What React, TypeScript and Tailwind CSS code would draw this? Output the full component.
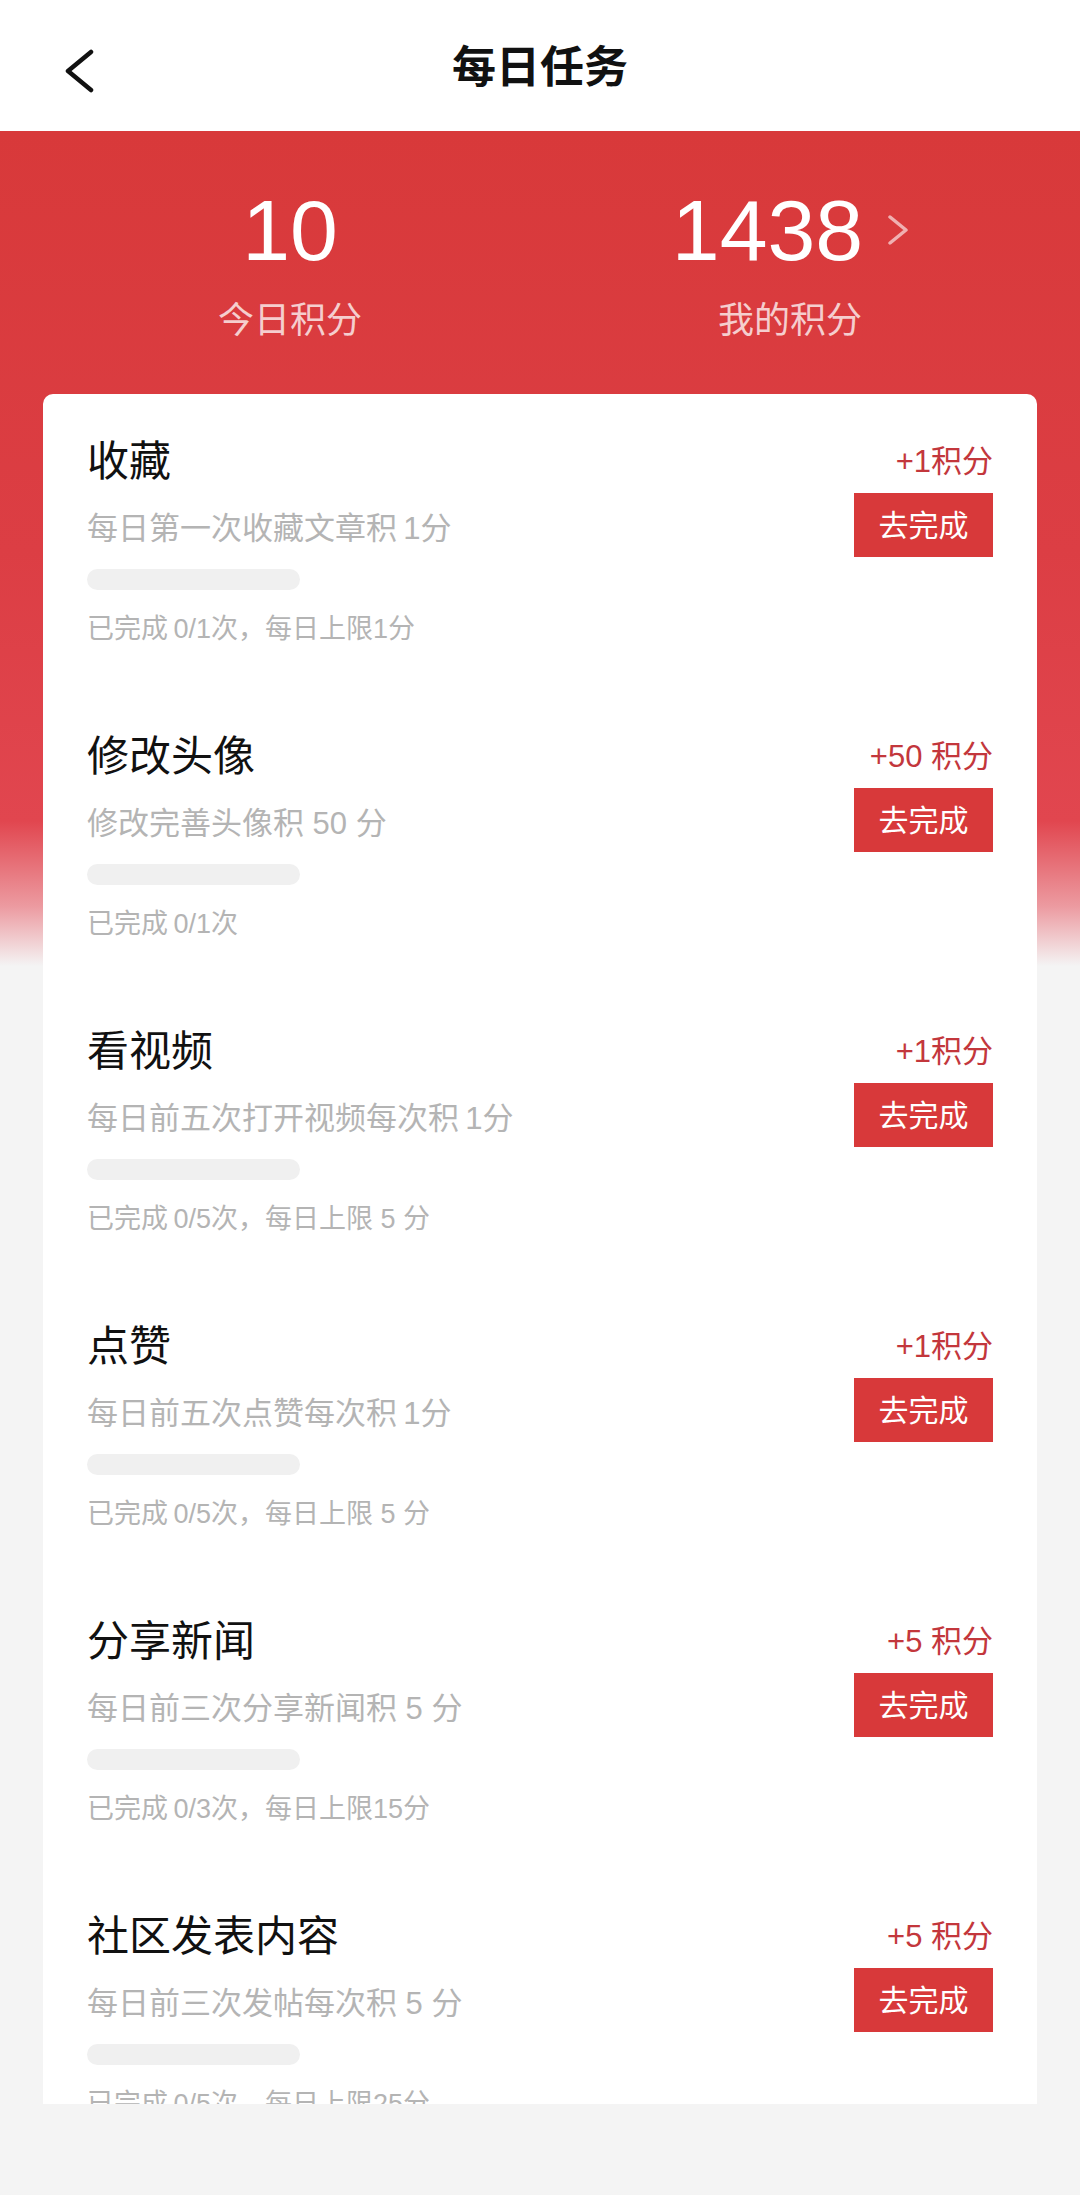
const tasks = [
  { title: '收藏', desc: '每日第一次收藏文章积\u20091分', status: '已完成\u20090/1次，每日上限1分', points: '+1积分' },
  { title: '修改头像', desc: '修改完善头像积 50 分', status: '已完成\u20090/1次', points: '+50 积分' },
  { title: '看视频', desc: '每日前五次打开视频每次积\u20091分', status: '已完成\u20090/5次，每日上限 5 分', points: '+1积分' },
  { title: '点赞', desc: '每日前五次点赞每次积\u20091分', status: '已完成\u20090/5次，每日上限 5 分', points: '+1积分' },
  { title: '分享新闻', desc: '每日前三次分享新闻积 5 分', status: '已完成\u20090/3次，每日上限15分', points: '+5 积分' },
  { title: '社区发表内容', desc: '每日前三次发帖每次积 5 分', status: '已完成\u20090/5次，每日上限25分', points: '+5 积分' },
]

function BackIcon() {
  return (
    <svg width="30" height="44" viewBox="0 0 30 44" fill="none" aria-hidden>
      <path d="M26 3 L3 22 L26 41" stroke="#111" strokeWidth="4.5" strokeLinecap="round" strokeLinejoin="round" />
    </svg>
  )
}

function TaskRow({ task }: { task: (typeof tasks)[number] }) {
  return (
    <div className="flex items-start justify-between pt-[47px] pb-[46px]">
      <div className="flex flex-col">
        <p className="text-[42px] leading-[42px] text-[#111]">{task.title}</p>
        <p className="mt-[30px] text-[31px] leading-[31px] text-[#b4b4b4]">{task.desc}</p>
        <div className="mt-[25px] h-[21px] w-[213px] rounded-full bg-[#f0f0f0]" />
        <p className="mt-[26px] text-[27px] leading-[27px] text-[#b4b4b4]">{task.status}</p>
      </div>
      <div className="flex flex-col items-end">
        <p className="text-[31px] leading-[42px] text-[#c3373c]">{task.points}</p>
        <button className="mt-[10px] flex h-[64px] w-[139px] items-center justify-center bg-[#d8393a] text-[30px] text-white">
          去完成
        </button>
      </div>
    </div>
  )
}

export default function App() {
  return (
    <div className="flex h-[2195px] w-[1080px] flex-col overflow-hidden bg-[#f4f4f4] font-['Liberation_Sans','Noto_Sans_CJK_SC',sans-serif]">
      <header className="grid h-[131px] shrink-0 grid-cols-[1fr_auto_1fr] items-center bg-white pt-[4px]">
        <div className="mt-[6px] pl-[65px]">
          <BackIcon />
        </div>
        <h1 className="text-[44px] font-semibold text-[#111]">每日任务</h1>
        <div />
      </header>

      <main className="min-h-0 flex-1 overflow-hidden bg-[linear-gradient(180deg,#d8393a_0px,#dc3e44_420px,#e1464f_690px,#ec9aa0_775px,#f4f4f4_835px)]">
        <section className="grid grid-cols-2 px-[40px] pt-[56px]">
          <div className="flex flex-col items-center">
            <span className="text-[86px] leading-[86px] text-white">10</span>
            <span className="mt-[30px] text-[36px] leading-[36px] text-white/75">今日积分</span>
          </div>
          <div className="flex flex-col items-center">
            <div className="flex items-center gap-[25px]">
              <span className="text-[86px] leading-[86px] text-white">1438</span>
              <svg width="20" height="30" viewBox="0 0 20 30" fill="none" aria-hidden>
                <path d="M2 2 L18 15 L2 28" stroke="rgba(255,255,255,0.6)" strokeWidth="3.5" strokeLinecap="round" strokeLinejoin="round" />
              </svg>
            </div>
            <span className="mt-[30px] text-[36px] leading-[36px] text-white/75">我的积分</span>
          </div>
        </section>

        <div className="mx-[43px] mt-[55px] rounded-t-[10px] bg-white px-[44px]">
          {tasks.map((t) => (
            <TaskRow key={t.title} task={t} />
          ))}
        </div>
      </main>

      <div className="h-[91px] shrink-0 bg-[#f4f4f4]" />
    </div>
  )
}
